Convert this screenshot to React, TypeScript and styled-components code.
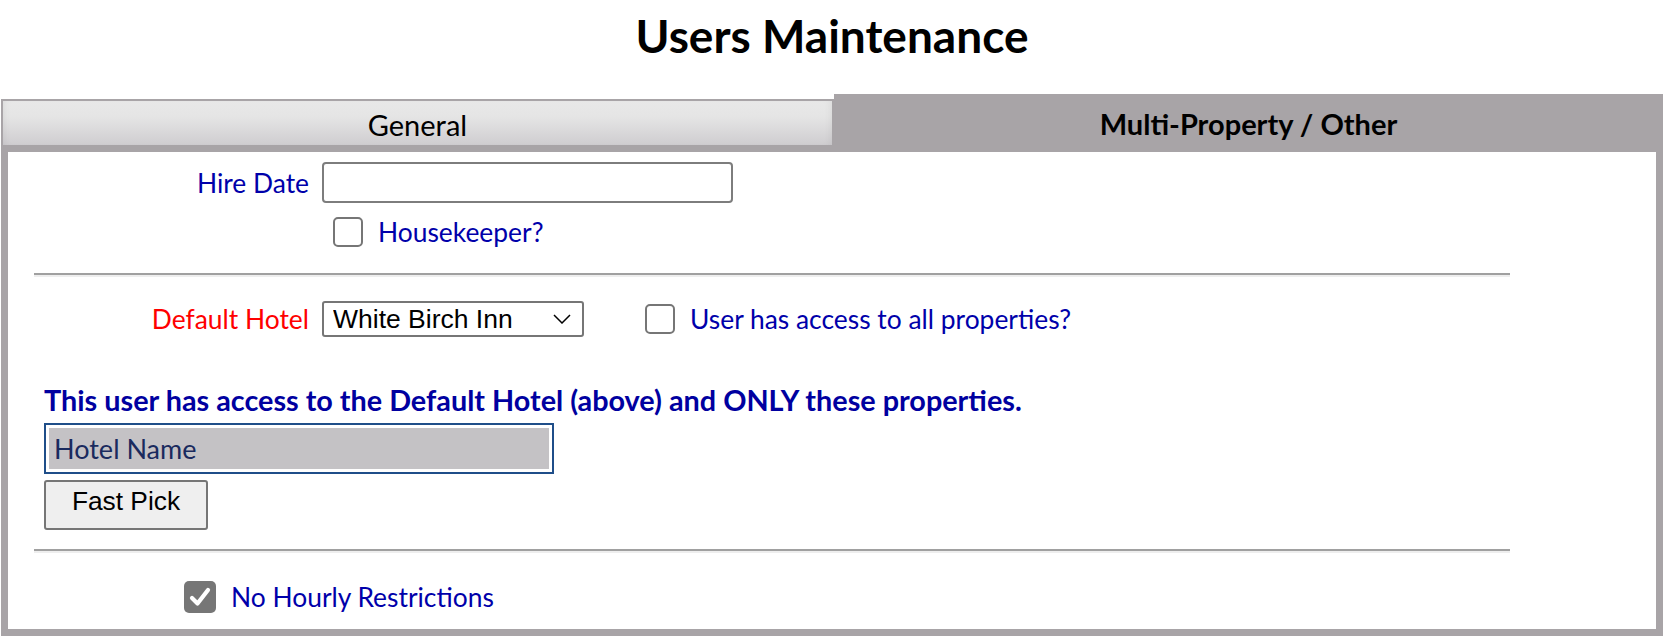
import React from 'react';
import styled, { createGlobalStyle } from 'styled-components';

const GlobalStyle = createGlobalStyle`
  body {
    margin: 0;
    background: #fff;
    font-family: Lato, 'Open Sans', sans-serif;
  }
`;

const GRAY = '#a8a4a7';
const LABEL_BLUE = '#0000aa';

const Page = styled.div`
  padding: 0 2px 0 1px;
`;

const Title = styled.h1`
  margin: 0;
  height: 94px;
  box-sizing: border-box;
  padding-top: 12px;
  line-height: 48px;
  text-align: center;
  font-size: 46px;
  font-weight: 700;
  color: #000;
`;

const TabRow = styled.div`
  display: flex;
  align-items: flex-end;
  height: 58px;
`;

const Tab = styled.div<{ $active?: boolean }>`
  flex: 1;
  box-sizing: border-box;
  display: flex;
  align-items: center;
  justify-content: center;
  font-size: 29px;
  color: #000;
  ${({ $active }) =>
    $active
      ? `
    height: 58px;
    background: ${GRAY};
    font-weight: 700;
  `
      : `
    height: 53px;
    padding-top: 2px;
    border: 2px solid ${GRAY};
    border-bottom-width: 7px;
    background: linear-gradient(#e8e8e8 0%, #e5e5e5 35%, #cfcdd0 100%);
    box-shadow: inset 6px 0 8px -6px rgba(0,0,0,0.08), inset -6px 0 8px -6px rgba(0,0,0,0.08);
  `}
`;

const Panel = styled.div`
  border: 7px solid ${GRAY};
  border-top: 0;
  background: #fff;
  padding: 10px 0 16px;
`;

const FieldRow = styled.div<{ $gap?: number }>`
  display: grid;
  grid-template-columns: 301px auto;
  column-gap: 13px;
  align-items: center;
  margin-top: ${({ $gap }) => $gap ?? 0}px;
`;

const Label = styled.label<{ $red?: boolean }>`
  text-align: right;
  font-size: 26.4px;
  color: ${({ $red }) => ($red ? '#ff0000' : LABEL_BLUE)};
`;

const TextInput = styled.input`
  box-sizing: border-box;
  width: 411px;
  height: 41px;
  border: 2px solid #7d7d7d;
  border-radius: 4px;
  background: #fff;
  font-size: 24px;
`;

const Controls = styled.div<{ $indent?: number; $gap?: number }>`
  display: flex;
  align-items: center;
  margin-left: ${({ $indent }) => $indent ?? 0}px;
  margin-top: ${({ $gap }) => $gap ?? 0}px;
`;

const CheckLabel = styled.label<{ $offset?: number }>`
  display: inline-flex;
  align-items: center;
  gap: 15px;
  margin-left: ${({ $offset }) => $offset ?? 0}px;
  font-size: 26.4px;
  line-height: 30px;
  color: ${LABEL_BLUE};
`;

const Box = styled.span<{ $checked?: boolean; $size?: number }>`
  box-sizing: border-box;
  flex: none;
  width: ${({ $size }) => $size ?? 30}px;
  height: ${({ $size }) => $size ?? 30}px;
  border-radius: 5px;
  display: inline-flex;
  align-items: center;
  justify-content: center;
  border: ${({ $checked }) => ($checked ? 'none' : '2px solid #767676')};
  background: ${({ $checked }) => ($checked ? '#767676' : '#fff')};
`;

const Rule = styled.hr<{ $gap: number }>`
  margin: ${({ $gap }) => $gap}px 0 0 26px;
  width: 1476px;
  height: 0;
  border: 0;
  border-top: 2px solid #a0a0a0;
  border-bottom: 2px solid #eeeeee;
`;

const SelectWrap = styled.div`
  position: relative;
  width: 262px;
  height: 36px;
`;

const Select = styled.select`
  appearance: none;
  box-sizing: border-box;
  width: 100%;
  height: 100%;
  border: 2px solid #767676;
  border-radius: 3px;
  background: #fff;
  padding: 0 0 0 9px;
  font-family: 'Liberation Sans', Arial, sans-serif;
  font-size: 26.5px;
  color: #000;
`;

const Chevron = styled.svg`
  position: absolute;
  right: 13px;
  top: 13px;
  pointer-events: none;
`;

const Section = styled.div<{ $gap: number }>`
  margin: ${({ $gap }) => $gap}px 0 0 36px;
`;

const Heading = styled.h2`
  margin: 0;
  font-size: 28.8px;
  font-weight: 700;
  line-height: 1.2;
  color: #0000a0;
`;

const ListBox = styled.div`
  box-sizing: border-box;
  margin-top: 5px;
  width: 510px;
  height: 51px;
  border: 2px solid #1f4e89;
  padding: 3px;
`;

const ListHeader = styled.div`
  height: 100%;
  display: flex;
  align-items: center;
  padding-left: 5px;
  background: #c4c2c5;
  font-size: 27px;
  color: #1a2a5e;
`;

const Button = styled.button`
  display: block;
  box-sizing: border-box;
  margin-top: 6px;
  width: 164px;
  height: 50px;
  border: 2px solid #767676;
  border-radius: 3px;
  background: #efefef;
  padding-bottom: 7px;
  font-family: 'Liberation Sans', Arial, sans-serif;
  font-size: 26.3px;
  color: #000;
`;

const Check = () => (
  <svg width="22" height="20" viewBox="0 0 22 20">
    <path d="M3 11 L8.5 16.5 L19 3" fill="none" stroke="#fff" strokeWidth="4.2" strokeLinecap="round" strokeLinejoin="round" />
  </svg>
);

export default function App() {
  return (
    <Page>
      <GlobalStyle />
      <Title>Users Maintenance</Title>
      <TabRow>
        <Tab>General</Tab>
        <Tab $active>Multi-Property / Other</Tab>
      </TabRow>
      <Panel>
        <FieldRow>
          <Label>Hire Date</Label>
          <TextInput />
        </FieldRow>
        <FieldRow $gap={14}>
          <span />
          <Controls $indent={11}>
            <CheckLabel>
              <Box />
              Housekeeper?
            </CheckLabel>
          </Controls>
        </FieldRow>
        <Rule $gap={26} />
        <FieldRow $gap={24}>
          <Label $red>Default Hotel</Label>
          <Controls>
            <SelectWrap>
              <Select defaultValue="wbi">
                <option value="wbi">White Birch Inn</option>
              </Select>
              <Chevron width="18" height="10" viewBox="0 0 18 10">
                <path d="M1 1 L9 9 L17 1" fill="none" stroke="#000" strokeWidth="1.5" />
              </Chevron>
            </SelectWrap>
            <CheckLabel $offset={61}>
              <Box />
              User has access to all properties?
            </CheckLabel>
          </Controls>
        </FieldRow>
        <Section $gap={46}>
          <Heading>This user has access to the Default Hotel (above) and ONLY these properties.</Heading>
          <ListBox>
            <ListHeader>Hotel Name</ListHeader>
          </ListBox>
          <Button>Fast Pick</Button>
        </Section>
        <Rule $gap={19} />
        <Controls $indent={176} $gap={28}>
          <CheckLabel>
            <Box $checked $size={32}>
              <Check />
            </Box>
            No Hourly Restrictions
          </CheckLabel>
        </Controls>
      </Panel>
    </Page>
  );
}
